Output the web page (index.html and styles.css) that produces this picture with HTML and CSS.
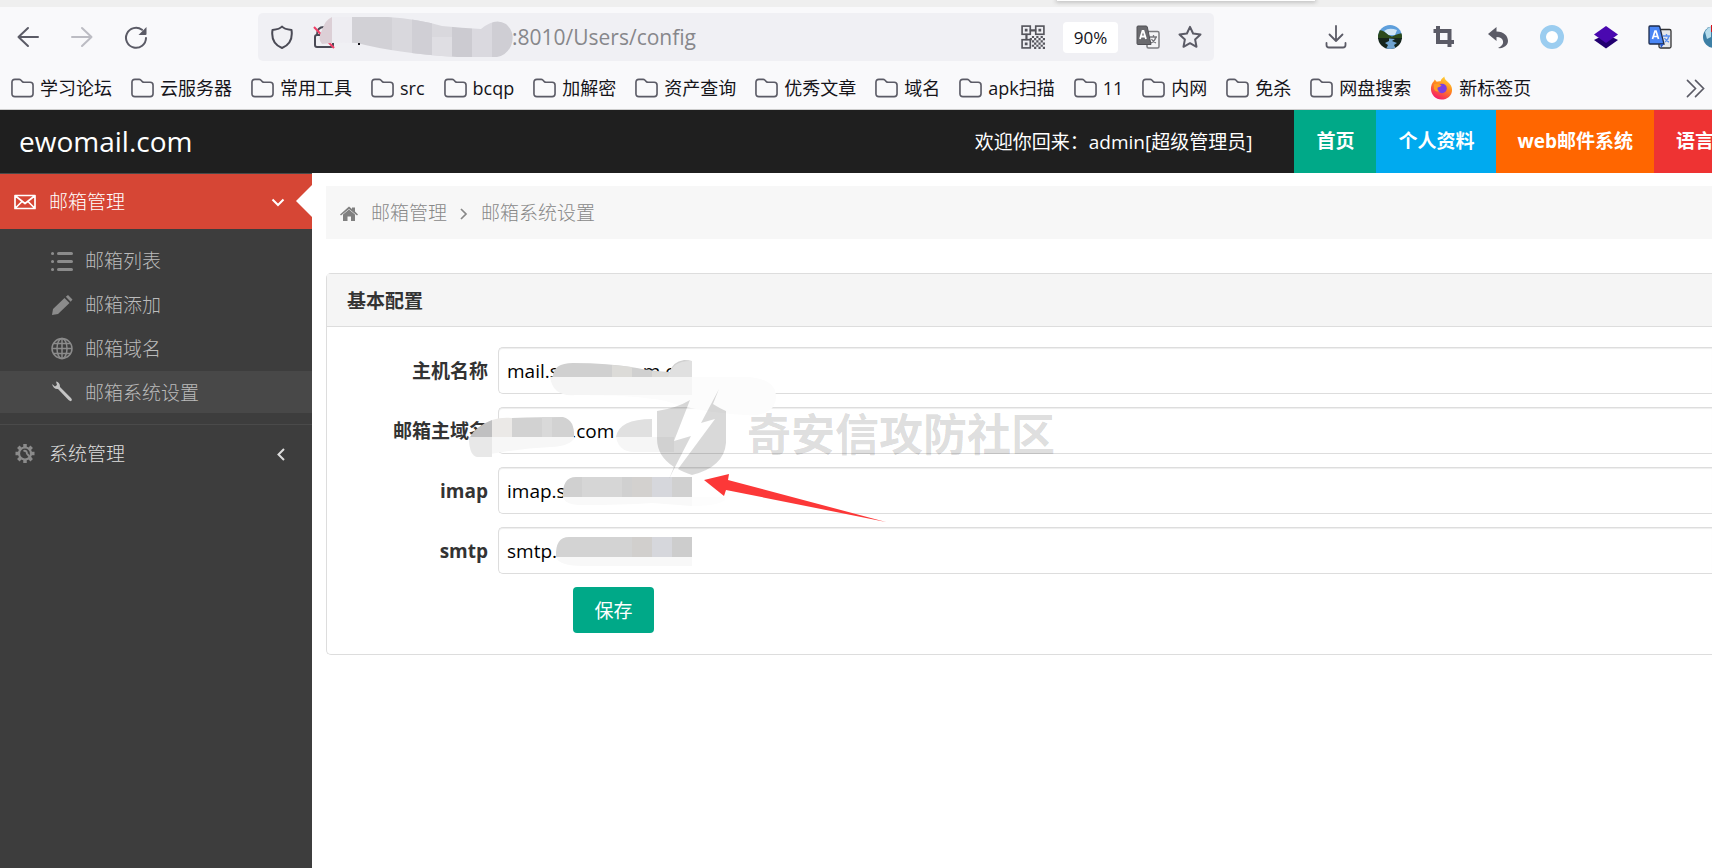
FILE: index.html
```html
<!DOCTYPE html>
<html lang="zh-CN">
<head>
<meta charset="utf-8">
<title>邮箱系统设置</title>
<link rel="stylesheet" href="styles.css">
</head>
<body>
<svg class="sprite" aria-hidden="true">
  <symbol id="folder" viewBox="0 0 24 20"><path d="M4 1h4.500q1 0 1.700.7l1.600 1.600q.7.7 1.700.7H20q3 0 3 3v9q0 3-3 3H4q-3 0-3-3V4q0-3 3-3z" fill="none" stroke="#5b5b66" stroke-width="1.700"/></symbol>
</svg>

<div class="browser">
  <div class="tabstrip"><div class="popover"></div></div>
  <div class="toolbar">
    <div class="navbtns">
      <button class="icon-btn" aria-label="后退"><svg viewBox="0 0 24 24"><path d="M22 12H2.500M12 3l-9.500 9L12 21" fill="none" stroke="#5b5b66" stroke-width="2" stroke-linecap="round" stroke-linejoin="round"/></svg></button>
      <button class="icon-btn" aria-label="前进"><svg viewBox="0 0 24 24"><path d="M2 12h19.500M12 3l9.500 9-9.500 9" fill="none" stroke="#bcbcc3" stroke-width="2" stroke-linecap="round" stroke-linejoin="round"/></svg></button>
      <button class="icon-btn" aria-label="刷新"><svg viewBox="0 0 24 24"><path d="M22 13a10 10 0 1 1-4-8.200" fill="none" stroke="#5b5b66" stroke-width="2" stroke-linecap="round"/><path d="M22.500 2v7q0 1-1 1h-7z" fill="#5b5b66"/></svg></button>
    </div>
    <div class="urlbar">
      <svg class="i24" viewBox="0 0 24 24"><path d="M12 1.500q2 2.500 9.500 3.500C23 15 18 20.500 12 23 6 20.500 1 15 2.500 5 10 4 12 1.500 12 1.500z" fill="none" stroke="#4a4a55" stroke-width="2" stroke-linejoin="round"/></svg>
      <svg class="i24" viewBox="0 0 24 24"><path d="M5 10q0-8 7-8t7 8" fill="none" stroke="#4a4a55" stroke-width="2"/><rect x="3" y="10" width="18" height="12" rx="2" fill="none" stroke="#4a4a55" stroke-width="2"/><path d="M2 2l20 21" stroke="#ef3e66" stroke-width="2"/></svg>
      <input class="url" type="text" aria-label="地址" value=":8010/Users/config">
      <svg class="i24" viewBox="0 0 22 22"><g fill="none" stroke="#55555c" stroke-width="1.500"><rect x="1" y="1" width="7.500" height="7.500"/><rect x="13.500" y="1" width="7.500" height="7.500"/><rect x="1" y="13.500" width="7.500" height="7.500"/></g><g fill="#55555c"><path d="M3.500 3.500h2.500v2.500h-2.500zM16 3.500h2.500v2.500H16zM3.500 16h2.500v2.500h-2.500zM8 4h6v2H8zM4 8h2v6H4z"/><path d="M10 10h2v2h-2zM14 10h2v2h-2zM18 10h2v2h-2zM12 12h2v2h-2zM16 12h2v2h-2zM20 12h2v2h-2zM10 14h2v2h-2zM14 14h2v2h-2zM18 14h2v2h-2zM12 16h2v2h-2zM16 16h2v2h-2zM20 16h2v2h-2zM10 18h2v2h-2zM14 18h2v2h-2zM18 18h2v2h-2zM12 20h2v2h-2zM16 20h2v2h-2zM20 20h2v2h-2zM8 12h2v2H8z"/></g></svg>
      <button class="zoom">90%</button>
      <svg class="i24" viewBox="0 0 24 24"><rect x="11" y="6.500" width="12" height="16.500" rx="1.500" fill="#f4f4f6" stroke="#7c7c80" stroke-width="1.500"/><path d="M14 12h7M17.500 10v2M20 12q-1 4-5 6M15.500 14q1.500 3 4.500 4" fill="none" stroke="#77777c" stroke-width="1.300"/><path d="M2 1h8q1 0 1.300 1L15 19.500H2q-1 0-1-1V2q0-1 1-1z" fill="#6a6a6e" stroke="#505055"/><path d="M4 14L6.500 6h1L10 14M5 11.500h4" fill="none" stroke="#fff" stroke-width="1.800"/></svg>
      <svg class="i24" viewBox="0 0 24 24"><path d="M12 1.800l3.100 6.700 7.400.9-5.400 5 1.400 7.400L12 18.200l-6.500 3.600 1.400-7.400-5.400-5 7.400-.9z" fill="none" stroke="#5b5b66" stroke-width="2" stroke-linejoin="round"/></svg>
    </div>
    <div class="exts">
      <svg class="i24" viewBox="0 0 24 24"><path d="M12 1v15M5.500 9.500L12 16l6.500-6.500M2.500 18v2q0 2.500 2.500 2.500h14q2.500 0 2.500-2.500v-2" fill="none" stroke="#5b5b66" stroke-width="1.800" stroke-linecap="round" stroke-linejoin="round"/></svg>
      <svg class="i24" viewBox="0 0 24 24"><defs><clipPath id="disc"><circle cx="12" cy="12" r="12"/></clipPath></defs><g clip-path="url(#disc)"><path d="M0 0h24v14H0z" fill="#5e9fdc"/><path d="M6 6q5-4 13-1l-2 5H10z" fill="#cfe5f6"/><path d="M0 5q5 0 8 3 3 3 6 3.500 4-2.500 10-3.500v6H0z" fill="#2c4a1c"/><path d="M0 13h24v11H0z" fill="#15251c"/><path d="M11 13.500l6 .5-3 2 5 2-3 2 2 4H8l2-4-3-2 4-2z" fill="#6fa3cf"/></g></svg>
      <svg class="i24" viewBox="0 0 24 24"><path d="M6 1v16h16M1.500 6h16v16" fill="none" stroke="#5b5b66" stroke-width="4"/></svg>
      <svg class="i24" viewBox="0 0 24 24"><path d="M2 9l8.500-7v4.500C18 6.500 22 11 22 16q0 4-5 6.500-2 1-5 .5 6-3 5-7-1-4-6.500-4V16z" fill="#5b5b66"/></svg>
      <svg class="i24" viewBox="0 0 24 24"><circle cx="12" cy="12" r="9" fill="#fff" stroke="#9bcdf0" stroke-width="6"/></svg>
      <svg class="i24" viewBox="0 0 24 24"><path d="M0 15l4-2h16l4 2-12 8.500z" fill="#220070"/><path d="M12 1l12 8.500L12 18 0 9.500z" fill="#4a08b0"/></svg>
      <svg class="i24" viewBox="0 0 24 24"><rect x="11" y="4.500" width="12" height="18.500" rx="1.500" fill="#e4e6ea" stroke="#333" stroke-width="1.300"/><path d="M15 11h7M18.500 9v2M21 11q-1 4-4 6M16.500 13q1.500 3 4.500 4" fill="none" stroke="#5b90f0" stroke-width="1.400"/><path d="M2 1h8.500q1 0 1.300 1L16 19H2q-1 0-1-1V2q0-1 1-1z" fill="#4a86f5" stroke="#1e2c4c" stroke-width="1.300"/><path d="M12 19h4l-3 4z" fill="#2456c8"/><path d="M4.500 14L7 6h1l2.500 8M5.500 11.500h4" fill="none" stroke="#fff" stroke-width="1.700"/></svg>
      <svg class="i24" viewBox="0 0 24 24"><circle cx="12" cy="12" r="11" fill="#3d7fa5"/><path d="M3 7q3-5 6-5v10l-4 2z" fill="#b6dcec"/><path d="M9 0h15v7H9z" fill="#d8131b"/></svg>
    </div>
  </div>
  <div class="bookmarks">
    <a href="#"><svg><use href="#folder"/></svg>学习论坛</a>
    <a href="#"><svg><use href="#folder"/></svg>云服务器</a>
    <a href="#"><svg><use href="#folder"/></svg>常用工具</a>
    <a href="#"><svg><use href="#folder"/></svg>src</a>
    <a href="#"><svg><use href="#folder"/></svg>bcqp</a>
    <a href="#"><svg><use href="#folder"/></svg>加解密</a>
    <a href="#"><svg><use href="#folder"/></svg>资产查询</a>
    <a href="#"><svg><use href="#folder"/></svg>优秀文章</a>
    <a href="#"><svg><use href="#folder"/></svg>域名</a>
    <a href="#"><svg><use href="#folder"/></svg>apk扫描</a>
    <a href="#"><svg><use href="#folder"/></svg>11</a>
    <a href="#"><svg><use href="#folder"/></svg>内网</a>
    <a href="#"><svg><use href="#folder"/></svg>免杀</a>
    <a href="#"><svg><use href="#folder"/></svg>网盘搜索</a>
    <a href="#"><svg class="fox" viewBox="0 0 24 24"><defs><linearGradient id="fx" x1=".8" y1="0" x2=".3" y2="1"><stop offset="0" stop-color="#ffe03a"/><stop offset=".45" stop-color="#ff8a1e"/><stop offset="1" stop-color="#f5156c"/></linearGradient></defs><path d="M4 5l1-2 2 2.500q2-1 4-.5 1-3 4-5 0 3 4 6 4 3.500 4 8c0 6-5 10-11 10S1 19 1 13q0-5 3-8z" fill="url(#fx)"/><circle cx="12.500" cy="12.500" r="5" fill="#7b3fe0"/><path d="M4 8q4-1 8 1-1 2-4 2.500-1 3 2 4-5 1-6-3z" fill="#ff9a22"/></svg>新标签页</a>
    <button class="more" aria-label="更多书签"><svg viewBox="0 0 20 20"><path d="M1.500 1.500L10 10l-8.500 8.500M10 1.500l8.500 8.500-8.500 8.500" fill="none" stroke="#5b5b66" stroke-width="1.700" stroke-linecap="round"/></svg></button>
  </div>
</div>

<header class="header">
  <a class="brand" href="#">ewomail.com</a>
  <span class="welcome">欢迎你回来：admin[超级管理员]</span>
  <nav class="topnav">
    <a class="green" href="#">首页</a>
    <a class="blue" href="#">个人资料</a>
    <a class="orange" href="#">web邮件系统</a>
    <a class="red" href="#">语言</a>
  </nav>
</header>

<div class="layout">
  <aside class="sidebar">
    <a class="group active" href="#"><svg class="gi" viewBox="0 0 24 24"><path d="M2 5.500h20v13H2zM2.500 6l9.500 7.500L21.500 6M2.500 18l6.500-6.500M21.500 18L15 11.500" fill="none" stroke="#fff" stroke-width="1.700" stroke-linejoin="round"/></svg><span>邮箱管理</span><svg class="chev" viewBox="0 0 14 14"><path d="M1.500 4.500L7 10l5.500-5.500" fill="none" stroke="#fff" stroke-width="2"/></svg></a>
    <ul class="sub">
      <li><a href="#"><svg viewBox="0 0 24 24"><path d="M8.500 4.500h13M8.500 12.500h13M8.500 20.500h13M2.500 4.500h.1M2.500 12.500h.1M2.500 20.500h.1" stroke="#8b8b8b" stroke-width="3" stroke-linecap="round"/></svg>邮箱列表</a></li>
      <li><a href="#"><svg viewBox="0 0 24 24"><path d="M2 22l1-6L14.500 5l5 5L8 21zM15.800 3.700L18 2l4.500 4.500-1.800 2.200z" fill="#8b8b8b"/></svg>邮箱添加</a></li>
      <li><a href="#"><svg viewBox="0 0 24 24"><g fill="none" stroke="#8b8b8b" stroke-width="1.500"><circle cx="12" cy="11.500" r="10"/><ellipse cx="12" cy="11.500" rx="5" ry="10"/><path d="M12 1.500v20M2 11.500h20M3.500 6.500h17M3.500 16.500h17"/></g></svg>邮箱域名</a></li>
      <li class="current"><a href="#"><svg viewBox="0 0 24 24"><path d="M2 3l3 2.500 2-1.500-1-3.500Q10 1 10 6L21 17q1.500 1.800.5 2.800T18.500 19L8 8Q3.500 8.500 2 3z" fill="#c4c4c4"/></svg>邮箱系统设置</a></li>
    </ul>
    <a class="group" href="#"><svg class="gi" viewBox="0 0 24 24"><circle cx="12" cy="11.500" r="6" fill="none" stroke="#8b8b8b" stroke-width="2.200"/><path d="M12 2v3.500M12 17.500V21M2.500 11.500H6M18 11.500h3.500M5.300 4.800l2.400 2.400M16.300 15.800l2.400 2.400M5.300 18.200l2.400-2.400M16.300 7.200l2.400-2.400" stroke="#8b8b8b" stroke-width="3.500"/><path d="M10.500 9q3-1 3.500 2.500l4 5" fill="none" stroke="#8b8b8b" stroke-width="2"/></svg><span>系统管理</span><svg class="chev" viewBox="0 0 14 14"><path d="M13 2L7.500 7.500 13 13" fill="none" stroke="#ddd" stroke-width="2"/></svg></a>
  </aside>

  <main class="content">
    <nav class="crumbs">
      <svg class="home" viewBox="0 0 18 18"><path d="M0 9.500L9 1.500l3 2.500V2.500h3v4l3 3-1 1L9 4 1 10.500z" fill="#808080"/><path d="M3 9.500l6-5 6 5V16h-4v-4.500H7.500V16H3z" fill="#808080"/></svg>
      <a href="#">邮箱管理</a>
      <svg class="sep" viewBox="0 0 8 12"><path d="M1 1l5 5-5 5" fill="none" stroke="#888" stroke-width="1.700"/></svg>
      <a href="#">邮箱系统设置</a>
    </nav>
    <section class="panel">
      <h2>基本配置</h2>
      <form class="form">
        <div class="row"><label for="host">主机名称</label><input id="host" type="text" value="mail.s                 m.c"></div>
        <div class="row"><label for="domain">邮箱主域名</label><input id="domain" type="text" value="             .com"></div>
        <div class="row"><label for="imap">imap</label><input id="imap" type="text" value="imap.s"></div>
        <div class="row"><label for="smtp">smtp</label><input id="smtp" type="text" value="smtp."></div>
        <button class="save" type="button">保存</button>
      </form>
    </section>
  </main>
</div>

<svg class="marks" width="1100" height="580" viewBox="0 0 1100 580" aria-hidden="true">
  <defs>
    <clipPath id="u"><path d="M322 30q3-10 10-13h56q30 2 54 9 20 2 39 3 14-12 25-5 10 9 5 22-5 10-14 11h-40q-62-4-100-14-22-1-35 1-5-5 0-14z"/></clipPath>
  </defs>
  <g clip-path="url(#u)">
    <path d="M318 0h14v70h-14z" fill="#dccfd6"/><path d="M332 0h20v70h-20z" fill="#eeedf2"/>
    <path d="M352 0h40v70h-40z" fill="#d2d1d6"/><path d="M392 0h60v70h-60z" fill="#d9d8dd"/><path d="M412 0h20v70h-20z" fill="#d0cfd5"/>
    <path d="M432 37h20v30h-20z" fill="#dfdee3"/><path d="M452 0h20v70h-20z" fill="#cccbd1"/><path d="M472 0h20v70h-20z" fill="#dad9df"/><path d="M492 0h22v70h-22z" fill="#cfced4"/>
  </g>
  <path d="M358 43h2v2h-2z" fill="#15141a"/>
  <path d="M550 377h196q30 1 30 20-1 20-30 18-50-3-80-14-30-6-90-6-22 0-26-18z" fill="#fcfcfc"/>
  <path d="M550 377h142v18H575q-22 2-25-18z" fill="#f5f5f5"/>
  <path d="M553 377q0-14 20-14 35 0 64 5 15 3 33 4 2-10 14-12 5 0 8 1v16z" fill="#d0d0d0"/>
  <path d="M612 365l20 2v10h-20zM652 371l18 2 4-5v9h-22z" fill="#dcdbd8"/>
  <path d="M668 377q4-17 24-16v16z" fill="#e0e0e0"/>
  <path d="M469 437h106q-4 9-24 10-40 2-74 10-8-1-8-20z" fill="#f7f7f7"/>
  <path d="M469 437h23v20h-15q-8-2-8-20z" fill="#e8e8e8"/>
  <path d="M470 437q6-11 22-17v17z" fill="#c0c0c1"/>
  <path d="M492 420q9-3 20-2v19h-20z" fill="#ebe9e7"/>
  <path d="M512 418q30-1 51-1 12 3 11 20h-62z" fill="#d2d2d2"/><path d="M542 417h10v20h-10z" fill="#d9d9d9"/>
  <path d="M616 437q3-18 36-18v18z" fill="#e0e0e0"/><path d="M616 437h58v15h-40q-15 0-18-15z" fill="#f6f6f6"/>
  <path d="M563 497h129v9l-40-3q-30 2-70 2-17 0-19-8z" fill="#f9f9f9"/><path d="M692 497h34q-2 9-34 9z" fill="#fdfdfd"/>
  <path d="M563 497q-1-20 13-20h116v20z" fill="#d0d0d0"/><path d="M582 477h20v20h-20zM602 477h20v20h-20z" fill="#d6d6d6"/><path d="M632 477h20v20h-20z" fill="#d3d1cf"/><path d="M652 477h20v20h-20z" fill="#d6d7dc"/>
  <path d="M556 557h136v9h-109q-24 0-27-9z" fill="#f8f8f8"/>
  <path d="M556 557q-1-20 13-20h123v20z" fill="#d3d3d3"/><path d="M632 537h20v20h-20z" fill="#d1cfcd"/><path d="M652 537h20v20h-20z" fill="#d6d7dc"/><path d="M672 537h20v20h-20z" fill="#cdcdcd"/>
  <g class="wm">
    <path d="M657 411q20-3 33-11l-16 41 17-5-16 31-6 12 5-12q-17-11-17-28z"/>
    <path d="M719 389l-6 15q8 5 13 7v32q-2 24-34 32-9-3-14-6l37-50-14 4z"/>
    <text x="747" y="451">奇安信攻防社区</text>
  </g>
  <path d="M704 480l25-6-1 6 158 42-160-32-2 6z" fill="#fc3838"/>
</svg>
</body>
</html>
```
FILE: styles.css
```css
* { box-sizing: border-box; }
body {
  margin: 0;
  min-height: 100vh;
  display: flex;
  flex-direction: column;
  position: relative;
  overflow: hidden;
  background: #fff;
  font-family: "Open Sans", "Noto Sans CJK SC", sans-serif;
  font-size: 19px;
  line-height: 27px;
}
a { color: inherit; text-decoration: none; }
button, input { font: inherit; }
button { border: 0; padding: 0; background: none; }
svg { display: block; flex: none; }
.sprite { position: absolute; width: 0; height: 0; }
.i24 { width: 24px; height: 24px; }

.browser { background: #f9f9fb; border-bottom: 1px solid #ccc; }
.tabstrip { height: 7px; background: #efefef; overflow: hidden; }
.popover {
  width: 258px;
  height: 1px;
  margin-left: 1057px;
  background: #fff;
  box-shadow: 0 0 4px 1px #aaa;
}
.toolbar { display: flex; align-items: center; padding: 6px 0 0 16px; }
.navbtns { display: flex; gap: 30px; }
.icon-btn { width: 24px; height: 24px; }
.urlbar {
  flex: 1;
  display: flex;
  align-items: center;
  height: 48px;
  margin: 0 110px;
  padding: 0 12px;
  border-radius: 5px;
  background: #f0f0f4;
}
.urlbar .i24 + .i24 { margin-left: 18px; }
.url {
  flex: 1;
  min-width: 0;
  border: 0;
  padding: 0 0 0 176px;
  background: none;
  color: #87878b;
  font-size: 21px;
}
.zoom {
  width: 55px;
  height: 31px;
  margin: 0 18px;
  border-radius: 4px;
  background: #fff;
  color: #15141a;
  font-size: 17px;
}
.exts { display: flex; gap: 30px; margin-right: -14px; }
.bookmarks {
  display: flex;
  align-items: center;
  gap: 19px;
  height: 48px;
  padding: 6px 7px 0 11px;
  color: #15141a;
  font-size: 18px;
}
.bookmarks a { display: flex; align-items: center; gap: 6px; white-space: nowrap; }
.bookmarks a svg { width: 23px; height: 20px; }
.bookmarks a .fox { height: 24px; }
.more { margin-left: auto; }
.more svg { width: 19px; height: 19px; }

.header {
  display: flex;
  align-items: center;
  height: 63px;
  padding-left: 19px;
  background: #1f1f1f;
  color: #fff;
}
.brand { flex: 1; font-size: 28px; }
.welcome { margin-right: 42px; padding-top: 2px; }
.topnav { display: flex; align-self: stretch; margin-right: -24px; font-weight: 700; }
.topnav a { padding: 18px 22px; white-space: nowrap; }
.topnav .orange { padding: 18px 21px; }
.green { background: #00a988; }
.blue { background: #00aaef; }
.orange { background: #ff6600; }
.red { background: #ee3333; }

.layout { flex: 1; display: flex; }
.sidebar { width: 312px; flex: none; background: #3d3d3d; color: #ddd; font-weight: 300; }
.group {
  display: flex;
  align-items: center;
  height: 56px;
  padding: 0 27px 0 13px;
  border-top: 1px solid #4a4a4a;
}
.sub + .group { height: 58px; }
.group .gi { width: 24px; height: 24px; margin-right: 12px; }
.group span { padding-top: 2px; }
.chev { width: 14px; height: 14px; margin-left: auto; }
.active { position: relative; background: #d64635; color: #fff; }
.active::after {
  content: "";
  position: absolute;
  right: 0;
  top: 11px;
  border: 16px solid transparent;
  border-left: 0;
  border-right-color: #fff;
}
.sub { list-style: none; margin: 0; padding: 10px 0 11px; color: #bbb; }
.sub li { margin-bottom: 2px; }
.sub li:last-child { margin: 0; }
.sub a { display: flex; align-items: center; gap: 11px; height: 42px; padding: 2px 0 0 50px; }
.sub a svg { width: 24px; height: 24px; }
.current { background: #484848; }

.content { flex: 1; min-width: 0; padding: 13px 0 0 14px; }
.crumbs {
  display: flex;
  align-items: center;
  height: 53px;
  padding: 2px 0 0 14px;
  background: #f7f7f7;
  color: #888;
  font-weight: 300;
}
.home { width: 18px; height: 18px; margin-right: 13px; }
.sep { width: 8px; height: 12px; margin: 0 13px; }
.panel {
  margin-top: 34px;
  border: 1px solid #ddd;
  border-right: 0;
  border-radius: 5px 0 0 5px;
}
.panel h2 {
  margin: 0;
  padding: 14px 20px 11px;
  border-bottom: 1px solid #ddd;
  background: #f5f5f5;
  color: #333;
  font-size: 19px;
  line-height: 27px;
}
.form { padding: 20px 0 21px 20px; }
.row { display: flex; align-items: center; gap: 10px; margin-bottom: 13px; }
.row label { width: 141px; padding-top: 2px; text-align: right; font-weight: 700; color: #333; }
.row input {
  flex: 1;
  min-width: 0;
  height: 47px;
  padding: 0 8px;
  border: 1px solid #ddd;
  border-right: 0;
  border-radius: 5px 0 0 5px;
  box-shadow: inset 0 1px 1px #eee;
  color: #000;
}
.save {
  display: block;
  width: 81px;
  height: 46px;
  margin-left: 226px;
  padding-top: 2px;
  border-radius: 4px;
  background: #00a988;
  color: #fff;
}
.marks { position: absolute; left: 0; top: 0; pointer-events: none; }
.wm { fill: #000; fill-opacity: .15; font-size: 44px; font-weight: 700; }
```
